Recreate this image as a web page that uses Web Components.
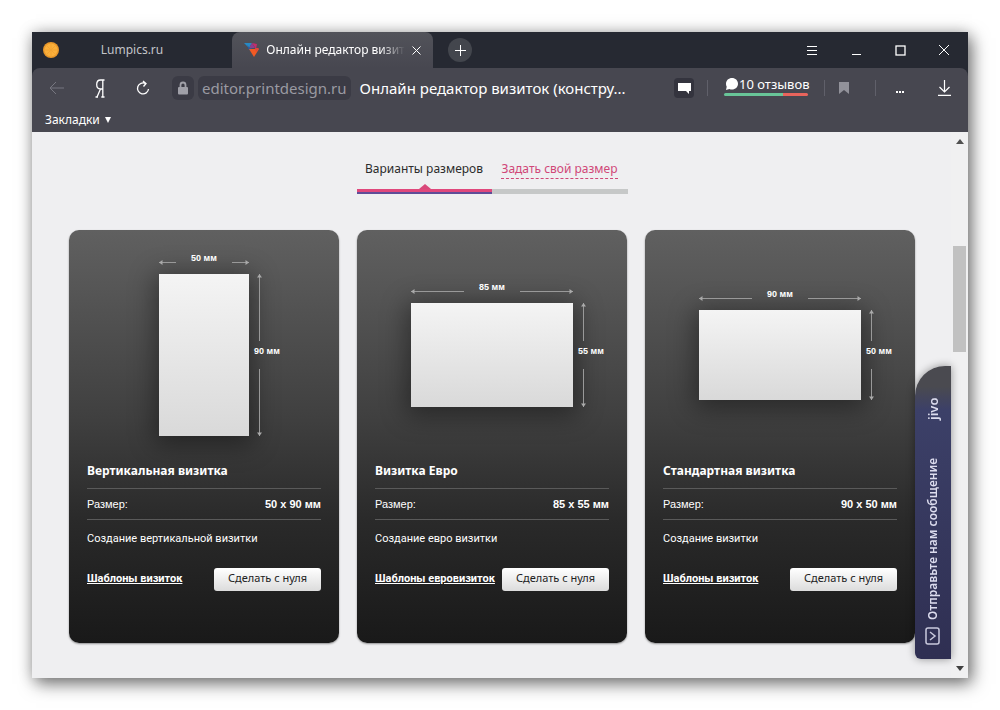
<!DOCTYPE html>
<html lang="ru">
<head>
<meta charset="utf-8">
<title>Онлайн редактор визиток</title>
<style>
  body { margin: 0; background: #fff; font-family: "Noto Sans", "Open Sans", sans-serif; }
</style>
</head>
<body>
<browser-window>
  <tab-strip slot="tabs"></tab-strip>
  <nav-bar slot="toolbar"></nav-bar>
  <bookmarks-bar slot="toolbar"></bookmarks-bar>
  <size-tabs></size-tabs>
  <card-grid>
    <size-card w="90" h="162" label-w="50 мм" label-h="90 мм" size="50 x 90 мм">
      <span slot="title">Вертикальная визитка</span>
      <span slot="text">Создание вертикальной визитки</span>
      <span slot="link">Шаблоны визиток</span>
    </size-card>
    <size-card w="162" h="104" label-w="85 мм" label-h="55 мм" size="85 x 55 мм">
      <span slot="title">Визитка Евро</span>
      <span slot="text">Создание евро визитки</span>
      <span slot="link">Шаблоны евровизиток</span>
    </size-card>
    <size-card w="162" h="90" label-w="90 мм" label-h="50 мм" size="90 x 50 мм">
      <span slot="title">Стандартная визитка</span>
      <span slot="text">Создание визитки</span>
      <span slot="link">Шаблоны визиток</span>
    </size-card>
  </card-grid>
  <chat-tab slot="overlay">Отправьте нам сообщение</chat-tab>
  <scroll-bar slot="scroll"></scroll-bar>
</browser-window>

<script>
const reset = `
  *, *::before, *::after { box-sizing: border-box; }
  button { font: inherit; color: inherit; background: none; border: 0; padding: 0; margin: 0; }
  a { color: inherit; text-decoration: none; }
  svg { display: block; flex: none; }
`;

function define(name, html) {
  customElements.define(name, class extends HTMLElement {
    constructor() {
      super();
      const root = this.attachShadow({ mode: 'open' });
      root.innerHTML = typeof html === 'function' ? html(this) : html;
    }
  });
}

define('browser-window', `
  <style>${reset}
    :host { display: block; padding: 32px; }
    .window { display: flow-root; background: #efeff1; box-shadow: 4px 6px 16px rgba(0,0,0,.5), 0 0 14px rgba(0,0,0,.2); }
    .head { background: #262932; }
    .tools { background: #474750; border-radius: 8px 8px 0 0; }
    .view { position: relative; display: grid; grid-template-columns: minmax(0, 1fr) 17px; }
    main { padding: 24px 36px 35px 37px; }
  </style>
  <div class="window">
    <div class="head">
      <slot name="tabs"></slot>
      <div class="tools"><slot name="toolbar"></slot></div>
    </div>
    <div class="view">
      <main><slot></slot></main>
      <slot name="scroll"></slot>
      <slot name="overlay"></slot>
    </div>
  </div>
`);

define('tab-strip', `
  <style>${reset}
    :host { display: flex; height: 36px; color: #c3c4c9; font-size: 12px; line-height: 18px; }
    .tab { width: 200px; display: grid; grid-template-columns: 16px 1fr 16px; align-items: center; padding: 0 11px; text-align: center; }
    .open { position: relative; display: flex; align-items: center; justify-content: space-between; width: 201px; padding: 0 11px 0 12px;
      background: linear-gradient(#52535a, #474750); border-radius: 8px 8px 0 0; color: #fff; }
    .open .name { white-space: nowrap;
      -webkit-mask-image: linear-gradient(90deg, #000 82%, transparent); mask-image: linear-gradient(90deg, #000 82%, transparent); }
    .new { align-self: center; width: 24px; height: 24px; margin-left: 15px; border-radius: 50%; background: #43464d; display: grid; place-items: center; }
    .controls { margin-left: auto; display: flex; padding-right: 2px; }
    .controls button { width: 44px; display: grid; place-items: center; }
    path, rect { fill: none; stroke: #fff; stroke-width: 1; }
    .logo path { stroke: none; }
  </style>
  <button class="tab" aria-label="Lumpics.ru">
    <svg width="16" height="16" viewBox="0 0 16 16"><circle cx="8" cy="8" r="8" fill="#e9982b"/><circle cx="8" cy="8" r="6.500" fill="#fbb03b"/><path d="M8 2v12M2 8h12M4 4l8 8M12 4l-8 8" style="stroke:#f3a433"/></svg>
    <span>Lumpics.ru</span>
  </button>
  <div class="open">
    <svg class="logo" width="16" height="16" viewBox="0 0 16 16"><path d="M0 1h8L5 6z" style="fill:#2689c4"/><path d="M8 1l3 5H5z" style="fill:#8a3f8f"/><path d="M8 1l5 1-1 5z" style="fill:#c22d6c"/><path d="M3 3l3 3 3 1-4 1z" style="fill:#2b5f9e"/><path d="M5 7h10l-5 8z" style="fill:#f15a24"/><path d="M11 6h4l-3 4z" style="fill:#e2453c"/></svg>
    <span class="name">Онлайн редактор визит</span>
    <button aria-label="Закрыть вкладку"><svg width="11" height="11"><path d="M1.500 1.500l8 8M9.500 1.500l-8 8"/></svg></button>
  </div>
  <button class="new" aria-label="Новая вкладка"><svg width="13" height="13"><path d="M6.500 1v11M1 6.500h11"/></svg></button>
  <div class="controls">
    <button aria-label="Меню"><svg width="11" height="11"><path d="M0 1.500h10M0 5.500h10M0 9.500h10"/></svg></button>
    <button aria-label="Свернуть"><svg width="11" height="11"><path d="M1 9.500h9"/></svg></button>
    <button aria-label="Развернуть"><svg width="11" height="11"><rect x="1" y="1" width="9" height="9" style="stroke-width:1.300"/></svg></button>
    <button aria-label="Закрыть"><svg width="12" height="12"><path d="M1 1l10 10M11 1L1 11"/></svg></button>
  </div>
`);

define('nav-bar', `
  <style>${reset}
    :host { display: flex; align-items: center; height: 40px; padding: 0 17px 0 3px; color: #fff; white-space: nowrap; }
    .nav { width: 43px; height: 36px; flex: none; display: grid; place-items: center; }
    .lock { width: 22px; height: 24px; margin: 0 4px 0 8px; flex: none; display: grid; place-items: center; background: #3b3b45; border-radius: 6px; }
    .host { background: #3b3b45; color: #9a9aa2; border-radius: 6px; padding: 0 4px; font-size: 15px; line-height: 24px; }
    .title { flex: 1; margin-left: 9px; font-size: 15px; line-height: 24px; text-align: left; }
    .note { width: 20px; height: 20px; background: #34343e; border-radius: 4px; display: grid; place-items: center; }
    i { width: 1px; height: 16px; background: #60606a; }
    .note + i { margin-left: 13px; }
    .reviews { width: 84px; margin: 0 16px; padding-bottom: 4px; font-size: 13px; line-height: 16px; }
    .reviews span { display: flex; align-items: center; }
    .reviews::after { content: ""; display: block; height: 3px; margin-top: 1px; border-radius: 2px; background: linear-gradient(90deg, #68c598 70%, #e8645c 70%); }
    .mark { margin: 0 25px 0 13px; }
    .dots { margin: 0 32px 0 18px; }
  </style>
  <button class="nav" aria-label="Назад"><svg width="16" height="14" fill="none" stroke="#777780"><path d="M15 7H1.500M7 1L1 7l6 6"/></svg></button>
  <button class="nav" aria-label="Яндекс"><svg width="10" height="19" viewBox="0 0 10 19" fill="none" stroke="#fff" stroke-width="1.300"><path d="M9.500 1H5.500C3 1 1.700 3 1.700 5.500S3 10 5.500 10h2.300M7.800 1v17M5.500 10L2 18M6.300 18H9.500M.5 18H3"/></svg></button>
  <button class="nav" aria-label="Обновить"><svg width="14" height="16" fill="none" stroke="#fff" stroke-width="1.300"><path d="M12.500 9a5.500 5.500 0 1 1-3-5.500M7 1l3 2.500L7.500 6.500"/></svg></button>
  <button class="lock" aria-label="Защищено"><svg width="12" height="14"><rect x="1" y="6" width="10" height="7.500" rx="1" fill="#a0a0a8"/><path d="M3.500 6V4a2.500 2.500 0 0 1 5 0v2" fill="none" stroke="#a0a0a8" stroke-width="1.800"/></svg></button>
  <button class="host">editor.printdesign.ru</button>
  <button class="title">Онлайн редактор визиток (констру...</button>
  <button class="note" aria-label="Комментарии"><svg width="13" height="12"><path d="M0 1h13v8h-2v3L8 9H0z" fill="#fff"/></svg></button>
  <i></i>
  <button class="reviews"><span><svg width="15" height="13"><path d="M8 0c3.300 0 6 2.400 6 5.700s-2.700 5.800-6 5.800c-1 0-1.800-.2-2.600-.6L2 12l.7-3.300A5.600 5.600 0 0 1 2 5.700C2 2.400 4.700 0 8 0z" fill="#fff"/></svg>10 отзывов</span></button>
  <i></i>
  <button class="mark" aria-label="В закладки"><svg width="12" height="14"><path d="M1 1h10v12l-5-4-5 4z" fill="#92929a"/></svg></button>
  <i></i>
  <button class="dots" aria-label="Ещё"><svg width="12" height="12" fill="#fff"><path d="M2 9h2v2H2zM5 9h2v2H5zM8 9h2v2H8z"/></svg></button>
  <button aria-label="Загрузки"><svg width="13" height="16" fill="none" stroke="#fff" stroke-width="1.200"><path d="M6.500 0v12M1.500 7l5 5 5-5M0 15.400h13"/></svg></button>
`);

define('bookmarks-bar', `
  <style>${reset}
    :host { display: flex; height: 24px; padding-left: 13px; color: #fff; font-size: 12px; line-height: 24px; }
    button { display: flex; align-items: center; gap: 5px; }
  </style>
  <button>Закладки <svg width="6" height="6"><path d="M0 0h6L3 6z" fill="#fff"/></svg></button>
`);

define('size-tabs', `
  <style>${reset}
    :host { display: flex; justify-content: center; font-size: 12px; line-height: 18px; }
    nav { display: grid; grid-template-columns: 135px 136px; text-align: center; white-space: nowrap; }
    a { position: relative; height: 38px; padding-top: 4px; border-bottom: 5px solid #c6c8c8; color: #d04778; }
    a[aria-current] { color: #2c2c2c; border-bottom: 0; }
    a[aria-current]::after { content: ""; position: absolute; left: 0; right: 0; bottom: 0; height: 5px; background: linear-gradient(#e0487c 60%, #5f4d98 60%); }
    svg { position: absolute; left: 62px; bottom: 5px; }
    span { display: inline-block; border-bottom: 1px dashed #d04778; }
  </style>
  <nav>
    <a href="#sizes" aria-current="page">Варианты размеров<svg width="12" height="5"><path d="M0 5l6-5 6 5z" fill="#d9487b"/></svg></a>
    <a href="#custom"><span>Задать свой размер</span></a>
  </nav>
`);

define('card-grid', `
  <style>
    :host { display: grid; grid-template-columns: repeat(3, minmax(0, 1fr)); gap: 18px; margin-top: 36px; }
  </style>
  <slot></slot>
`);

/* A measuring line: arrow, label, arrow, along one side of the sheet. */
define('size-rule', el => {
  const vertical = el.hasAttribute('vertical');
  return `
  <style>${reset}
    :host { display: flex; align-items: center; color: #fff; font: bold 9px/12px "Liberation Sans", Arial, sans-serif; white-space: nowrap; }
    .line { position: relative; flex: 1; background: #999; height: 1px; }
    .line svg { position: absolute; }
    .text { width: 56px; text-align: center; padding-bottom: 9px; }
    .start svg { left: 0; top: -2px; }
    .end svg { right: 0; top: -2px; }
    :host([vertical]) { flex-direction: column; align-items: flex-start; }
    :host([vertical]) .line { width: 1px; margin-left: 5px; }
    :host([vertical]) .text { width: auto; padding: 4px 0 12px; }
    :host([vertical]) .start svg { left: -2px; top: 0; }
    :host([vertical]) .end svg { left: -2px; right: auto; top: auto; bottom: 0; }
  </style>
  <div class="line start">${vertical
    ? '<svg width="5" height="4"><path d="M0 3.500L2.500 0 5 3.500z" fill="#aaa"/></svg>'
    : '<svg width="4" height="5"><path d="M3.500 0L0 2.500 3.500 5z" fill="#aaa"/></svg>'}</div>
  <div class="text"><slot></slot></div>
  <div class="line end">${vertical
    ? '<svg width="5" height="4"><path d="M0 .5L2.500 4 5 .5z" fill="#aaa"/></svg>'
    : '<svg width="4" height="5"><path d="M.5 0L4 2.500.5 5z" fill="#aaa"/></svg>'}</div>`;
});

define('size-card', el => `
  <style>${reset}
    :host { display: block; padding: 20px 18px 52px; border-radius: 10px; color: #fff;
      background: linear-gradient(#606060, #404040 45%, #2a2a2a 70%, #191919); box-shadow: 0 1px 2px rgba(0,0,0,.4);
      font-size: 11px; line-height: 18px; }
    .preview { height: 210px; display: grid; grid-template-columns: 1fr ${el.getAttribute('w')}px 1fr; grid-template-rows: 1fr ${el.getAttribute('h')}px 1fr; }
    .sheet { grid-area: 2 / 2; background: linear-gradient(#f4f4f4, #d9d9d9); box-shadow: 0 4px 24px 4px rgba(0,0,0,.4); }
    size-rule { grid-area: 1 / 2; align-self: end; margin-bottom: 1px; }
    size-rule[vertical] { grid-area: 2 / 3; align-self: stretch; justify-self: start; margin: 0 0 0 5px; }
    h2 { margin: 2px 0 8px; font-size: 12px; line-height: 18px; }
    dl { display: flex; justify-content: space-between; margin: 0; border: solid #5a5a5a; border-width: 1px 0; font: 11px/30px "Liberation Sans", Arial, sans-serif; }
    dd { margin: 0; font-weight: bold; }
    p { margin: 10px 0 20px; }
    p, a { font-family: Roboto, "Noto Sans", sans-serif; }
    .actions { display: flex; justify-content: space-between; align-items: center; white-space: nowrap; }
    a { font-weight: bold; text-decoration: underline; padding-bottom: 2px; }
    button { width: 107px; height: 23px; border-radius: 3px; background: linear-gradient(#fff, #dcdcdc); color: #222; line-height: 20px; padding-bottom: 3px; }
  </style>
  <div class="preview">
    <div class="sheet"></div>
    <size-rule>${el.getAttribute('label-w')}</size-rule>
    <size-rule vertical>${el.getAttribute('label-h')}</size-rule>
  </div>
  <h2><slot name="title"></slot></h2>
  <dl><dt>Размер:</dt><dd>${el.getAttribute('size')}</dd></dl>
  <p><slot name="text"></slot></p>
  <div class="actions"><a href="#templates"><slot name="link"></slot></a><button>Сделать с нуля</button></div>
`);

define('chat-tab', `
  <style>${reset}
    :host { position: absolute; right: 17px; bottom: 19px; color: #dcdcee; }
    button { width: 36px; height: 293px; display: flex; align-items: center; gap: 7px; padding: 14px 0 32px;
      writing-mode: vertical-rl; transform: rotate(180deg); border-radius: 0 6px 30px 0;
      background: linear-gradient(#2f2f52, #3c4068 85%, #4a4a50 93%); box-shadow: 0 0 8px rgba(0,0,0,.4);
      font-size: 12px; line-height: 18px; font-weight: 600; white-space: nowrap; }
    b { margin-top: auto; font-size: 13px; font-weight: 600; }
    svg { transform: rotate(180deg); }
  </style>
  <button><svg width="15" height="18" fill="none" stroke="#c9c9dd" stroke-width="1.500"><rect x="1" y="1" width="13" height="16" rx="2"/><path d="M5 5l5 4-5 4"/></svg><span><slot></slot></span><b>jivo</b></button>
`);

define('scroll-bar', `
  <style>${reset}
    :host { display: flex; flex-direction: column; align-items: center; background: #f0f0f1; padding: 7px 0; }
    .thumb { width: 13px; height: 106px; margin: 102px 0 auto; background: #c1c1c1; }
  </style>
  <svg width="8" height="5"><path d="M0 5l4-5 4 5z" fill="#505050"/></svg>
  <div class="thumb"></div>
  <svg width="8" height="5"><path d="M0 0l4 5 4-5z" fill="#404040"/></svg>
`);
</script>
</body>
</html>
